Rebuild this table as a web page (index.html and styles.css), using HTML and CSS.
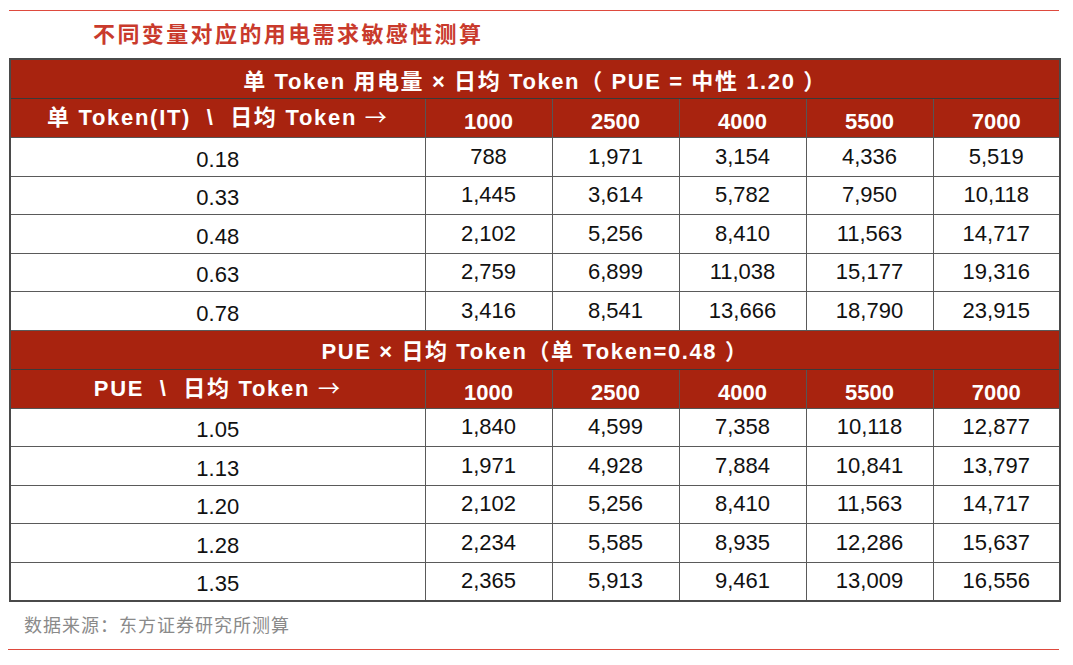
FILE: index.html
```html
<!DOCTYPE html>
<html lang="zh-CN">
<head>
<meta charset="utf-8">
<title>不同变量对应的用电需求敏感性测算</title>
<link rel="stylesheet" href="styles.css">
</head>
<body>
<div class="page">
  <div class="rule rule-top"></div>
  <div class="title">不同变量对应的用电需求敏感性测算</div>
  <table class="sens">
    <colgroup>
      <col class="c-label">
      <col class="c-num"><col class="c-num"><col class="c-num"><col class="c-num"><col class="c-num">
    </colgroup>
    <tbody>
      <tr class="sec"><th colspan="6">单 Token 用电量 × 日均 Token（ PUE = 中性 1.20 ）</th></tr>
      <tr class="hdr"><th class="lbl">单 Token(IT) &nbsp;\&nbsp; 日均 Token <span class="arrow">→</span></th><th>1000</th><th>2500</th><th>4000</th><th>5500</th><th>7000</th></tr>
      <tr><td class="key">0.18</td><td>788</td><td>1,971</td><td>3,154</td><td>4,336</td><td>5,519</td></tr>
      <tr><td class="key">0.33</td><td>1,445</td><td>3,614</td><td>5,782</td><td>7,950</td><td>10,118</td></tr>
      <tr><td class="key">0.48</td><td>2,102</td><td>5,256</td><td>8,410</td><td>11,563</td><td>14,717</td></tr>
      <tr><td class="key">0.63</td><td>2,759</td><td>6,899</td><td>11,038</td><td>15,177</td><td>19,316</td></tr>
      <tr><td class="key">0.78</td><td>3,416</td><td>8,541</td><td>13,666</td><td>18,790</td><td>23,915</td></tr>
      <tr class="sec"><th colspan="6">PUE × 日均 Token（单 Token=0.48 ）</th></tr>
      <tr class="hdr"><th class="lbl">PUE &nbsp;\&nbsp; 日均 Token <span class="arrow">→</span></th><th>1000</th><th>2500</th><th>4000</th><th>5500</th><th>7000</th></tr>
      <tr><td class="key">1.05</td><td>1,840</td><td>4,599</td><td>7,358</td><td>10,118</td><td>12,877</td></tr>
      <tr><td class="key">1.13</td><td>1,971</td><td>4,928</td><td>7,884</td><td>10,841</td><td>13,797</td></tr>
      <tr><td class="key">1.20</td><td>2,102</td><td>5,256</td><td>8,410</td><td>11,563</td><td>14,717</td></tr>
      <tr><td class="key">1.28</td><td>2,234</td><td>5,585</td><td>8,935</td><td>12,286</td><td>15,637</td></tr>
      <tr><td class="key">1.35</td><td>2,365</td><td>5,913</td><td>9,461</td><td>13,009</td><td>16,556</td></tr>
    </tbody>
  </table>
  <div class="source">数据来源：东方证券研究所测算</div>
  <div class="rule rule-bottom"></div>
</div>
</body>
</html>
```

FILE: styles.css
```css
html, body {
  margin: 0;
  padding: 0;
  background: #ffffff;
}

.page {
  width: 1073px;
  height: 665px;
  padding-top: 10px;
  box-sizing: border-box;
  font-family: "Liberation Sans", "Noto Sans CJK SC", Arial, sans-serif;
}

.rule {
  height: 1px;
  background: #de4a3e;
}

.rule-top {
  margin-left: 9px;
  width: 1050px;
}

.rule-bottom {
  margin-left: 8px;
  width: 1051px;
}

.title {
  height: 47px;
  line-height: 42px;
  padding-left: 93px;
  font-family: "Noto Sans CJK SC", sans-serif;
  font-weight: 700;
  font-size: 22px;
  letter-spacing: 2.4px;
  color: #c93a2c;
}

.sens {
  margin-left: 9px;
  width: 1050px;
  border-collapse: collapse;
  table-layout: fixed;
  border: 2px solid #4a4a4a;
}

.c-label { width: 415px; }
.c-num { width: 127px; }

.sens th,
.sens td {
  border: 1px solid #555555;
  padding: 0;
  text-align: center;
  white-space: nowrap;
}

.sens th {
  background: #a8230f;
  color: #ffffff;
  font-weight: 700;
  font-size: 22px;
  height: 37px;
}

.sec th {
  border-color: #3a3a3a;
  padding-bottom: 1px;
  letter-spacing: 1.6px;
}

.hdr th {
  padding-top: 8px;
  box-sizing: border-box;
}

.hdr th.lbl {
  padding-top: 0;
  padding-bottom: 6px;
  letter-spacing: 1.7px;
}

.arrow {
  font-family: "Noto Sans CJK SC", sans-serif;
  font-weight: 400;
}

.sens td {
  height: 37.5px;
  font-size: 22px;
  color: #111111;
  border-color: #5a5a5a;
}

.sens td.key {
  padding-top: 6px;
  box-sizing: border-box;
}

.source {
  height: 47px;
  line-height: 44px;
  padding-left: 24px;
  font-family: "Noto Sans CJK SC", sans-serif;
  font-size: 18px;
  letter-spacing: 1px;
  color: #8a8a8a;
}
```
